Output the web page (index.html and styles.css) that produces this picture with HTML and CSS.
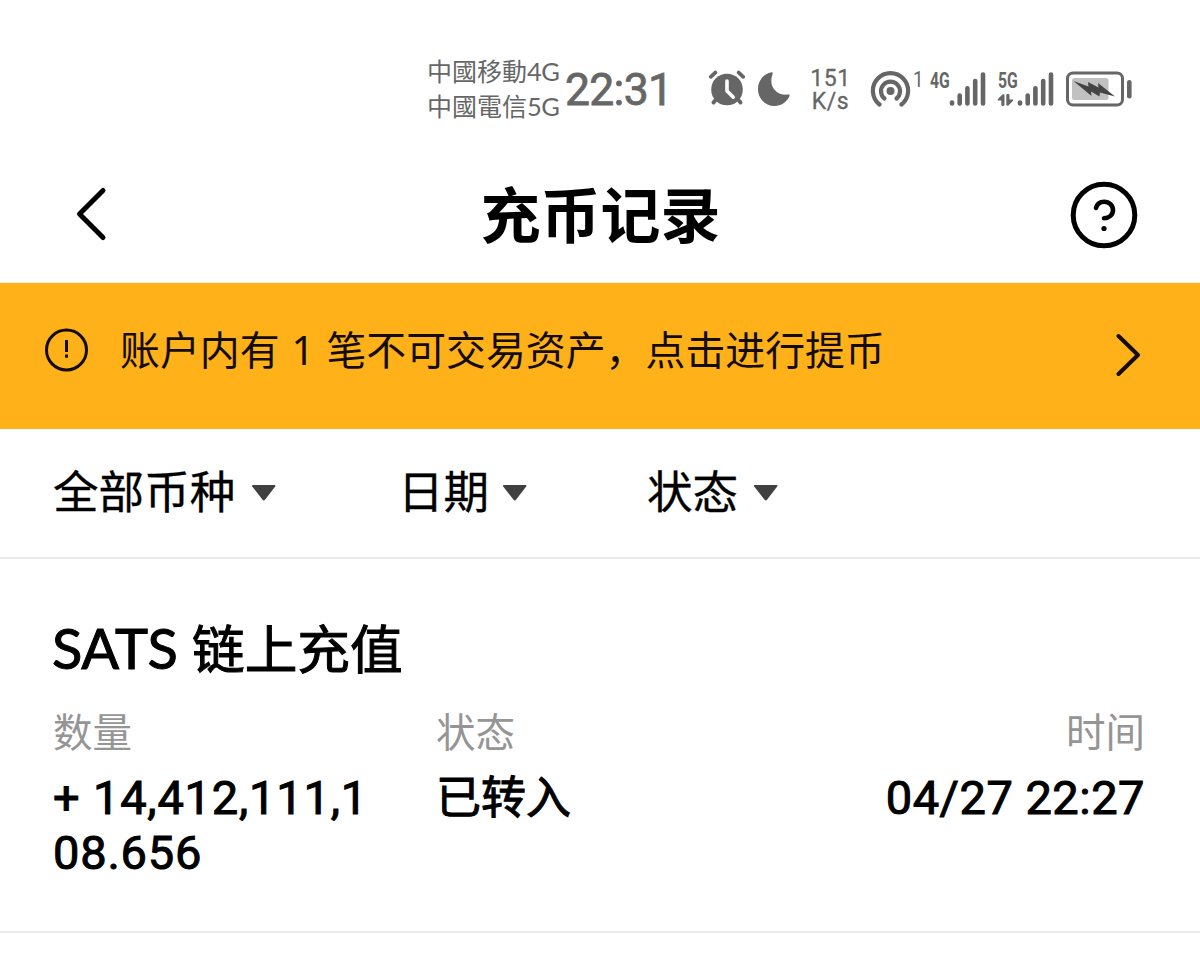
FILE: index.html
```html
<!DOCTYPE html>
<html lang="zh-CN">
<head>
<meta charset="utf-8">
<title>充币记录</title>
<link rel="stylesheet" href="styles.css">
</head>
<body>
<div class="status-bar">
  <div class="carriers"><span class="carrier">中國移動<span class="gen">4G</span></span><span class="carrier">中國電信<span class="gen">5G</span></span></div>
  <div class="clock">22:31</div>
  <svg class="alarm" width="38" height="38" viewBox="0 0 38 38" fill="none" stroke="#666" stroke-linecap="round">
    <circle cx="19" cy="19.500" r="15.800" fill="#666" stroke="none"/>
    <path d="M2.800 6.800 7.300 2.600M30.700 2.600 35.200 6.800" stroke-width="3.800"/>
    <path d="M8 29.500 5.500 32.500M30 29.500l2.500 3" stroke-width="4"/>
    <path d="M19 11v10l6.300 6.200" stroke="#fff" stroke-width="3.600" stroke-linejoin="round"/>
  </svg>
  <svg class="moon" width="34" height="36" viewBox="0 0 34 36"><path d="M14.500 1.200C7 2.500 1 9.500 1 18c0 9.700 7.500 17 16.500 17 6.500 0 12.500-4 15-10 .5-1.300-.2-1.800-1.500-1.500C20 25 11 16 15.500 3.200c.4-1.200.2-2.200-1-2z" fill="#666"/></svg>
  <div class="speed"><span>151</span><span>K/s</span></div>
  <svg class="hotspot" width="42" height="36" viewBox="0 0 42 36" fill="none" stroke="#666" stroke-width="4.200" stroke-linecap="round">
    <circle cx="20.500" cy="20" r="4" fill="#666" stroke="none"/>
    <path d="M9.500 33.500A17.600 17.600 0 1 1 31.500 33.500"/>
    <path d="M14.500 27.500A9.500 9.500 0 1 1 26.500 27.500"/>
  </svg>
  <div class="hotspot-count">1</div>
  <div class="signal signal-4g">
    <div class="signal-label">4G</div>
    <svg width="38" height="36" viewBox="0 0 38 36" stroke="#666" stroke-width="4.600" stroke-linecap="round"><path d="M3 31.500v1M10.700 24.500v8M18.400 17.200v15.300M26.200 10v22.500M34 3.500v29"/></svg>
  </div>
  <div class="signal signal-5g">
    <div class="signal-side">
      <div class="signal-label">5G</div>
      <svg class="traffic" width="17" height="12" viewBox="0 0 17 12" fill="#666"><path d="M7.500 1.500a1.300 1.300 0 0 0-2.400-.7L.8 5.200Q.3 6.300 1.400 6.500H4.300v4a1.600 1.600 0 0 0 3.200 0zM9.300 1.500a1.600 1.600 0 0 1 3.200 0v4h2.900q1.100.2.600 1.300L11.700 11.200a1.300 1.300 0 0 1-2.400-.7z"/></svg>
    </div>
    <svg width="38" height="36" viewBox="0 0 38 36" stroke="#666" stroke-width="4.600" stroke-linecap="round"><path d="M3 31.500v1M10.700 24.500v8M18.400 17.200v15.300M26.200 10v22.500M34 3.500v29"/></svg>
  </div>
  <svg class="battery" width="67" height="36" viewBox="0 0 67 36">
    <rect x="1.500" y="2" width="55" height="32" rx="5.500" fill="#fff" stroke="#666" stroke-width="3"/>
    <rect x="6" y="7" width="36.500" height="22" rx="2.500" fill="#c1c1c1"/>
    <path d="M7.500 10 22.500 15.500 22 11 32.500 16.500 32 12 49 25.500 34 21.500 33.500 25.500 25 20.500 25.500 25z" fill="#444"/>
    <rect x="61" y="9" width="4.600" height="18.500" rx="2.300" fill="#666"/>
  </svg>
</div>

<header class="header">
  <svg class="back" width="34" height="56" viewBox="0 0 34 56" fill="none" stroke="#000" stroke-width="5" stroke-linecap="round" stroke-linejoin="round"><path d="M28 4.500 4.500 28 28 51.500"/></svg>
  <h1 class="title">充币记录</h1>
  <svg class="help" width="68" height="68" viewBox="0 0 68 68" fill="none" stroke="#000" stroke-linecap="round" stroke-linejoin="round">
    <circle cx="34" cy="34" r="30.800" stroke-width="5"/>
    <path d="M26 27c1-4 4-6.300 8.200-6.300 5 0 8.800 3.600 8.800 8.300 0 4.800-3.800 8-9 8.200" stroke-width="4.600"/>
    <circle cx="34" cy="47.500" r="2.600" fill="#000" stroke="none"/>
  </svg>
</header>

<section class="notice">
  <svg class="notice-icon" width="44" height="44" viewBox="0 0 44 44" fill="none" stroke="#140c00"><circle cx="21.500" cy="22" r="20" stroke-width="3"/><path d="M21.500 12v12M21.500 26.500v3.200" stroke-width="3"/></svg>
  <p class="notice-text">账户内有<span class="notice-count">1</span>笔不可交易资产，点击进行提币</p>
  <svg class="chevron" width="26" height="44" viewBox="0 0 26 44" fill="none" stroke="#140c00" stroke-width="4" stroke-linecap="round" stroke-linejoin="round"><path d="M2.500 3 22 22 2.500 41"/></svg>
</section>

<nav class="filters">
  <div class="filter filter-coin"><span>全部币种</span><svg class="caret" width="26" height="18" viewBox="0 0 26 18"><path d="M2 1h21.500q1.500 0 .7 1.500L14 15.800q-1.200 1.200-2.400 0L1.200 2.500Q.5 1 2 1z" fill="#404040"/></svg></div>
  <div class="filter filter-date"><span>日期</span><svg class="caret" width="26" height="18" viewBox="0 0 26 18"><path d="M2 1h21.500q1.500 0 .7 1.500L14 15.800q-1.200 1.200-2.400 0L1.200 2.500Q.5 1 2 1z" fill="#404040"/></svg></div>
  <div class="filter filter-state"><span>状态</span><svg class="caret" width="26" height="18" viewBox="0 0 26 18"><path d="M2 1h21.500q1.500 0 .7 1.500L14 15.800q-1.200 1.200-2.400 0L1.200 2.500Q.5 1 2 1z" fill="#404040"/></svg></div>
</nav>

<article class="record">
  <h2 class="record-title"><span class="ticker">SATS</span>链上充值</h2>
  <div class="record-grid">
    <div class="cell"><div class="label">数量</div><div class="value value-amount">+ 14,412,111,1<br>08.656</div></div>
    <div class="cell"><div class="label">状态</div><div class="value value-cjk">已转入</div></div>
    <div class="cell cell-time"><div class="label">时间</div><div class="value value-time">04/27 22:27</div></div>
  </div>
</article>
</body>
</html>
```
FILE: styles.css
```css
* { box-sizing: border-box; margin: 0; padding: 0; }
body { background: #fff; color: #000; font-family: "Noto Sans", "Noto Sans CJK SC", sans-serif; overflow: hidden; }
svg { display: block; flex: none; }

.status-bar { display: flex; height: 150px; padding: 55px 0 0 427px; color: #666; white-space: nowrap; }
.carriers { display: flex; flex-direction: column; width: 138px; margin-top: -1px; font: 25px/33.500px "Noto Sans CJK TC", sans-serif; }
.gen { font-family: Lato, sans-serif; font-size: 25.5px; letter-spacing: -.5px; }
.clock { width: 143px; font: 400 44.500px/71px Roboto, sans-serif; letter-spacing: -.7px; -webkit-text-stroke: .8px #666; }
.alarm { margin: 15px 11px 0 0; }
.moon { margin: 16px 18px 0 0; }
.speed { display: flex; flex-direction: column; align-items: center; width: 43px; margin: 12px 18px 0 0; font: 23px/23px Roboto, sans-serif; letter-spacing: .5px; -webkit-text-stroke: .3px #666; }
.hotspot { margin: 16px 1px 0 0; }
.hotspot-count { width: 17px; font: 22px/49px Roboto, sans-serif; transform: scaleX(.85); transform-origin: left; }
.signal { display: flex; margin-top: 16px; }
.signal-label { width: 18px; font: bold 21.500px/19px Roboto, sans-serif; transform: scaleX(.73); transform-origin: left; }
.signal-4g { width: 68px; }
.signal-4g .signal-label { width: 19px; }
.signal-side { width: 18px; margin-right: 1px; }
.traffic { margin: 4px 0 0 -1px; }
.signal-5g { width: 68px; }
.battery { margin-top: 16px; }

.header { display: flex; align-items: flex-start; height: 133px; padding: 30px 62px 0 75px; border-bottom: 1px solid #ececec; }
.title { flex: 1; padding: 2px 0 0 22px; text-align: center; font: bold 60px/60px "Noto Sans CJK SC", sans-serif; }
.back { margin-top: 6px; }
.help { margin-top: 1px; }

.notice { display: flex; height: 146px; padding: 0 58px 0 45px; background: #ffb11a; color: #140c00; }
.notice-icon { margin-top: 45px; }
.notice-text { flex: 1; padding: 35px 0 0 31px; font: 39.900px/60px "Noto Sans CJK SC", sans-serif; white-space: nowrap; }
.notice-count { padding: 0 12px; font-family: "Noto Sans", sans-serif; }
.chevron { margin-top: 50px; }

.filters { display: flex; height: 130px; padding: 25px 53px 0; border-bottom: 2px solid #eaeaea; font: 45.600px/70px "Noto Sans CJK SC", sans-serif; -webkit-text-stroke: .3px #000; }
.filter { display: flex; gap: 15px; }
.filter-coin { width: 345px; gap: 16px; }
.filter-date { width: 249px; }
.filter-date .caret { margin-left: -2px; }
.caret { margin-top: 30px; }

.record { height: 374px; padding: 47px 55px 0 53px; border-bottom: 2px solid #eaeaea; }
.record-title { display: flex; font: 400 52.700px/80px "Noto Sans CJK SC", sans-serif; -webkit-text-stroke: 1px #000; }
.ticker { width: 140px; margin-left: -1px; padding-top: 2px; font: 400 56px/80px Lato, sans-serif; letter-spacing: -.3px; }
.record-grid { display: grid; grid-template-columns: 383px 300px 1fr; margin-top: 13px; }
.label { color: #959595; font: 39.500px/58px "Noto Sans CJK SC", sans-serif; }
.value { margin-top: 11px; font: 400 47px/55px Roboto, sans-serif; letter-spacing: .5px; white-space: nowrap; -webkit-text-stroke: 1px #000; }
.value-amount { letter-spacing: .8px; }
.value-cjk { margin-top: 9px; font: 400 45px/54px "Noto Sans CJK SC", sans-serif; letter-spacing: 0; }
.cell-time { text-align: right; }
```
